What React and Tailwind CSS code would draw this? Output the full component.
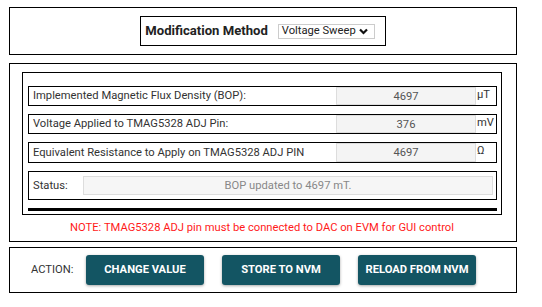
const rows = [
  { label: "Implemented Magnetic Flux Density (BOP):", value: "4697", unit: "µT", h: "h-[20px]" },
  { label: "Voltage Applied to TMAG5328 ADJ Pin:", value: "376", unit: "mV", h: "h-[20px]" },
  { label: "Equivalent Resistance to Apply on TMAG5328 ADJ PIN", value: "4697", unit: "Ω", h: "h-[21px]" },
];

const buttons = ["CHANGE VALUE", "STORE TO NVM", "RELOAD FROM NVM"];

const App = () => {
  return (
    <div className="w-[542px] h-[307px] bg-white font-['Roboto',sans-serif] text-[#333] pt-[7px] pl-[9px]">
      <div className="w-[508px] flex flex-col">
        {/* method selector */}
        <div className="h-[48px] border border-black flex items-center justify-center">
          <div className="h-[30px] border border-black flex items-center pl-[4px] pr-[10px]">
            <span className="text-[13.1px] font-bold text-[#222]">Modification Method</span>
            <div className="ml-[10px] h-[15px] border border-[#ccc] bg-white flex items-center pl-[3px] pr-[6px] gap-[3px] text-[11.2px] leading-none text-[#222]">
              Voltage Sweep
              <svg width="9" height="7" viewBox="0 0 9 7" className="mt-[1px]">
                <path d="M1 1.5 L4.5 5 L8 1.5" fill="none" stroke="#111" strokeWidth="2.2" />
              </svg>
            </div>
          </div>
        </div>

        {/* readings */}
        <div className="mt-[8px] h-[179px] border border-black flex flex-col pt-[8px] pl-[12px] pr-[14px]">
          <div className="h-[143px] border border-black pt-[13px] pl-[5px] pr-[4px] flex flex-col gap-[8px]">
            {rows.map((row) => (
              <div key={row.label} className={`${row.h} border border-black flex items-stretch text-[11.2px]`}>
                <span className="flex-1 pl-[4px] flex items-center leading-none">{row.label}</span>
                <div className="w-[140px] bg-[#f4f4f4] border border-[#ddd] flex items-center justify-center text-[#555] leading-none pt-[1px]">
                  {row.value}
                </div>
                <span className="w-[20px] pl-[1px] leading-none pt-[2px]">{row.unit}</span>
              </div>
            ))}
            <div className="h-[29px] border border-black flex items-center text-[11.2px]">
              <span className="w-[54px] pl-[4px] leading-none">Status:</span>
              <div className="flex-1 mr-[3px] h-[19px] bg-[#f6f6f6] border border-[#ddd] flex items-center justify-center text-[#888] leading-none">
                BOP updated to 4697 mT.
              </div>
            </div>
            <div className="h-[3px] bg-black" />
          </div>
          <div className="flex-1 flex items-center justify-center text-[11.2px] text-[#ff1a1a]">
            NOTE: TMAG5328 ADJ pin must be connected to DAC on EVM for GUI control
          </div>
        </div>

        {/* actions */}
        <div className="mt-[5px] h-[46px] border border-black flex items-center pl-[21px]">
          <span className="w-[55px] text-[11.2px]">ACTION:</span>
          <div className="flex gap-[18px]">
            {buttons.map((b) => (
              <button
                key={b}
                type="button"
                className="w-[118px] h-[30px] rounded-[3px] bg-[#135563] text-white text-[11.2px] font-bold shadow-[0_1px_3px_rgba(0,0,0,0.35)]"
              >
                {b}
              </button>
            ))}
          </div>
        </div>
      </div>
    </div>
  );
};

export default App;
